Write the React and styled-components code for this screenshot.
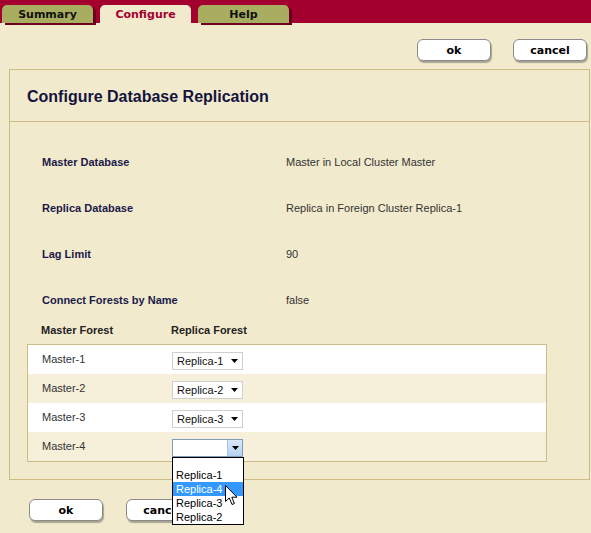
import React from 'react';
import styled, { createGlobalStyle } from 'styled-components';

const GlobalStyle = createGlobalStyle`
  html, body {
    margin: 0;
    padding: 0;
    background: #f2eacd;
  }
  body {
    font-family: "Liberation Sans", Arial, sans-serif;
    width: 591px;
    height: 533px;
    overflow: hidden;
  }
`;

const TABS = [
  { name: 'Summary', active: false },
  { name: 'Configure', active: true },
  { name: 'Help', active: false },
];

const INFO_ROWS = [
  { label: 'Master Database', value: 'Master in Local Cluster Master' },
  { label: 'Replica Database', value: 'Replica in Foreign Cluster Replica-1' },
  { label: 'Lag Limit', value: '90' },
  { label: 'Connect Forests by Name', value: 'false' },
];

const FORESTS = [
  { master: 'Master-1', replica: 'Replica-1' },
  { master: 'Master-2', replica: 'Replica-2' },
  { master: 'Master-3', replica: 'Replica-3' },
  { master: 'Master-4', replica: '', open: true },
];

const OPTIONS = ['Replica-1', 'Replica-4', 'Replica-3', 'Replica-2'];

function Arrow() {
  return (
    <svg width="7" height="4" viewBox="0 0 7 4">
      <path d="M0 0 H7 L3.5 4 Z" fill="#000" />
    </svg>
  );
}

function Cursor() {
  return (
    <svg width="13" height="21" viewBox="0 0 13 21">
      <path
        d="M0.5 0.5 L0.5 16.5 L4.3 12.9 L7 19.5 L9.4 18.5 L6.8 12.2 L12 12.2 Z"
        fill="#fff"
        stroke="#000"
        strokeWidth="1"
        strokeLinejoin="miter"
      />
    </svg>
  );
}

export default function App() {
  return (
    <Page>
      <GlobalStyle />
      <TabBar>
        {TABS.map(tab => (
          <Tab key={tab.name} $active={tab.active}>
            {tab.name}
          </Tab>
        ))}
      </TabBar>

      <TopActions>
        <Button>ok</Button>
        <Button>cancel</Button>
      </TopActions>

      <Panel>
        <PanelHeader>Configure Database Replication</PanelHeader>
        <InfoList>
          {INFO_ROWS.map(row => (
            <InfoRow key={row.label}>
              <InfoLabel>{row.label}</InfoLabel>
              <InfoValue>{row.value}</InfoValue>
            </InfoRow>
          ))}
        </InfoList>

        <ForestHead>
          <HeadCell>Master Forest</HeadCell>
          <HeadCell>Replica Forest</HeadCell>
        </ForestHead>
        <ForestTable>
          {FORESTS.map((f, i) => (
            <ForestRow key={f.master} $alt={i % 2 === 1}>
              <MasterCell>{f.master}</MasterCell>
              <SelectWrap>
                <Select $open={f.open}>
                  <SelectText>{f.replica}</SelectText>
                  <SelectButton $open={f.open}>
                    <Arrow />
                  </SelectButton>
                </Select>
                {f.open && (
                  <DropList>
                    <BlankOption />
                    {OPTIONS.map(opt => (
                      <Option key={opt} $selected={opt === 'Replica-4'}>
                        {opt}
                      </Option>
                    ))}
                    <CursorSpot>
                      <Cursor />
                    </CursorSpot>
                  </DropList>
                )}
              </SelectWrap>
            </ForestRow>
          ))}
        </ForestTable>
      </Panel>

      <BottomActions>
        <Button>ok</Button>
        <Button>cancel</Button>
      </BottomActions>
    </Page>
  );
}

const Page = styled.div`
  width: 591px;
  height: 533px;
  background: #f2eacd;
`;

const TabBar = styled.div`
  height: 23px;
  background: #a3002f;
  display: flex;
  align-items: flex-end;
  padding-left: 2px;
  gap: 7px;
`;

const Tab = styled.div`
  width: 91px;
  height: 18px;
  border-radius: 5px 5px 0 0;
  background: ${p => (p.$active ? '#f2eacd' : '#a8ad5f')};
  color: ${p => (p.$active ? '#a3002f' : '#111')};
  box-shadow: ${p => (p.$active ? 'none' : '3px 2px 0 #6d0020')};
  font-family: "DejaVu Sans", Verdana, sans-serif;
  font-weight: bold;
  font-size: 11px;
  display: flex;
  justify-content: center;
  align-items: center;
  padding-top: 1px;
  box-sizing: border-box;
`;

const TopActions = styled.div`
  display: flex;
  justify-content: flex-end;
  gap: 22px;
  padding: 16px 4px 8px 0;
`;

const BottomActions = styled.div`
  display: flex;
  gap: 23px;
  padding: 19px 0 0 29px;
`;

const Button = styled.button`
  width: 74px;
  height: 22px;
  margin: 0;
  padding: 0;
  background: #fff;
  border: 1px solid #8a8a8a;
  border-radius: 6px;
  box-shadow: 1px 2px 1px rgba(0, 0, 0, 0.3);
  font-family: "DejaVu Sans", Verdana, sans-serif;
  font-weight: bold;
  font-size: 11px;
  color: #000;
`;

const Panel = styled.div`
  margin-left: 9px;
  width: 581px;
  box-sizing: border-box;
  border: 1px solid #cdbd85;
  padding-bottom: 17px;
`;

const PanelHeader = styled.div`
  height: 52px;
  display: flex;
  align-items: center;
  padding: 2px 0 0 17px;
  box-sizing: border-box;
  border-bottom: 1px solid #cdbd85;
  font-size: 16px;
  font-weight: bold;
  color: #14143f;
`;

const InfoList = styled.div`
  padding: 17px 0 0 32px;
`;

const InfoRow = styled.div`
  height: 46px;
  display: flex;
  align-items: center;
  font-size: 11px;
`;

const InfoLabel = styled.div`
  width: 244px;
  font-weight: bold;
  color: #1a1a4a;
`;

const InfoValue = styled.div`
  color: #333;
`;

const ForestHead = styled.div`
  display: flex;
  height: 16px;
  align-items: center;
  padding-left: 31px;
  margin-top: -1px;
  margin-bottom: 6px;
  font-size: 11px;
  font-weight: bold;
  color: #222;
`;

const HeadCell = styled.div`
  width: 130px;
`;

const ForestTable = styled.div`
  margin-left: 17px;
  width: 518px;
  border: 1px solid #cdbd85;
`;

const ForestRow = styled.div`
  height: 29px;
  display: flex;
  align-items: center;
  background: ${p => (p.$alt ? '#f6efda' : '#fff')};
  font-size: 11px;
  color: #333;
`;

const MasterCell = styled.div`
  width: 130px;
  padding-left: 14px;
  margin-top: -2px;
`;

const SelectWrap = styled.div`
  position: relative;
  margin-top: 2px;
`;

const Select = styled.div`
  width: 71px;
  height: 18px;
  box-sizing: border-box;
  background: #fff;
  border: 1px solid ${p => (p.$open ? '#7f9db9' : '#cfcfcf')};
  display: flex;
  align-items: center;
  font-size: 11px;
  color: #111;
`;

const SelectText = styled.div`
  flex: 1;
  padding-left: 4px;
`;

const SelectButton = styled.div`
  width: ${p => (p.$open ? '15px' : '16px')};
  height: 100%;
  box-sizing: border-box;
  display: flex;
  align-items: center;
  justify-content: center;
  padding-top: 1px;
  background: ${p => (p.$open ? 'linear-gradient(#d9e8fb, #b6d2f3)' : 'transparent')};
  border-left: ${p => (p.$open ? '1px solid #a7c4e8' : 'none')};
`;

const DropList = styled.div`
  position: absolute;
  top: 18px;
  left: 0;
  width: 72px;
  box-sizing: border-box;
  background: #fff;
  border: 1px solid #000;
  z-index: 5;
`;

const BlankOption = styled.div`
  height: 10px;
`;

const Option = styled.div`
  height: 14px;
  line-height: 14px;
  padding-left: 3px;
  font-size: 11px;
  background: ${p => (p.$selected ? '#3399ff' : '#fff')};
  color: ${p => (p.$selected ? '#fff' : '#000')};
`;

const CursorSpot = styled.div`
  position: absolute;
  left: 52px;
  top: 27px;
  line-height: 0;
`;
